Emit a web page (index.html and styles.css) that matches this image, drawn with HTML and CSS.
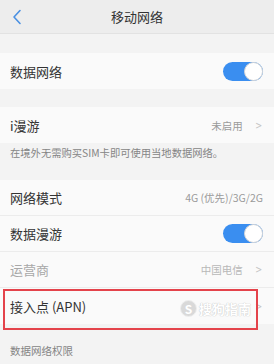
FILE: index.html
```html
<!DOCTYPE html>
<html lang="zh-CN">
<head>
<meta charset="utf-8">
<link rel="stylesheet" href="styles.css">
</head>
<body>
<div class="page">
  <header class="topbar">
    <svg class="back" width="12" height="16" viewBox="0 0 12 16"><path d="M9 1.5 L3 8 L9 14.5" fill="none" stroke="#4a90e2" stroke-width="1.6" stroke-linecap="round" stroke-linejoin="round"/></svg>
    <div class="title">移动网络</div>
  </header>
  <div class="gap"></div>
  <div class="group">
    <div class="row"><span class="label">数据网络</span><span class="toggle"><span class="knob"></span></span></div>
  </div>
  <div class="gap"></div>
  <div class="group">
    <div class="row"><span class="label">i漫游</span><span class="right"><span class="value">未启用</span><span class="chev">&gt;</span></span></div>
  </div>
  <div class="note">在境外无需购买SIM卡即可使用当地数据网络。</div>
  <div class="group">
    <div class="row sep"><span class="label">网络模式</span><span class="value">4G (优先)/3G/2G</span></div>
    <div class="row sep"><span class="label">数据漫游</span><span class="toggle"><span class="knob"></span></span></div>
    <div class="row sep"><span class="label dim">运营商</span><span class="right"><span class="value light">中国电信</span><span class="chev">&gt;</span></span></div>
    <div class="row apn"><span class="label">接入点 (APN)</span><span class="chev">&gt;</span>
      <div class="highlight"></div>
      <div class="watermark"><span class="wm-s">S</span><span>搜狗指南</span></div>
    </div>
  </div>
  <div class="section">数据网络权限</div>
</div>
</body>
</html>
```
FILE: styles.css
```css
html, body {
  margin: 0;
  padding: 0;
  background: #f3f3f3;
}
.page {
  width: 274px;
  height: 364px;
  overflow: hidden;
  font-family: "Noto Sans CJK SC", "Noto Sans", sans-serif;
  color: #333;
  background: #f3f3f3;
}
.topbar {
  height: 34px;
  box-sizing: border-box;
  background: #ededed;
  border-bottom: 1px solid #e2e2e2;
  display: flex;
  align-items: center;
  justify-content: center;
  position: relative;
}
.back {
  position: absolute;
  left: 11px;
  top: 9px;
}
.title {
  font-size: 13px;
  color: #333;
}
.gap {
  height: 19px;
}
.gap + .group + .gap {
  height: 18px;
}
.group {
  background: #fafafa;
}
.row {
  height: 36px;
  box-sizing: border-box;
  padding: 0 11px 0 10px;
  display: flex;
  align-items: center;
  justify-content: space-between;
  position: relative;
}
.row.sep {
  border-bottom: 1px solid #ececec;
}
.label {
  font-size: 13px;
  color: #333;
}
.label.dim {
  color: #a8a8a8;
}
.right {
  display: flex;
  align-items: center;
  gap: 11px;
}
.value {
  font-size: 10.5px;
  color: #9a9a9a;
}
.value.light {
  color: #b8b8b8;
}
.chev {
  font-size: 11px;
  color: #c4c4c4;
  font-family: "DejaVu Sans", sans-serif;
  transform: scaleX(0.75);
}
.toggle {
  width: 40px;
  height: 19px;
  border-radius: 10px;
  background: #3a8ef0;
  position: relative;
  display: block;
}
.knob {
  position: absolute;
  right: 0;
  top: 0;
  width: 19px;
  height: 19px;
  box-sizing: border-box;
  border-radius: 50%;
  background: #fff;
  border: 1px solid #d6d6d6;
}
.note {
  height: 37px;
  box-sizing: border-box;
  padding: 2px 0 0 10px;
  font-size: 10.3px;
  line-height: 15px;
  color: #858585;
}
.highlight {
  position: absolute;
  left: 3px;
  top: 1px;
  width: 255px;
  height: 41px;
  box-sizing: border-box;
  border: 2px solid #e4434b;
}
.watermark {
  position: absolute;
  left: 180px;
  top: 12px;
  font-size: 13px;
  line-height: 17px;
  font-weight: bold;
  color: #ffffff;
  text-shadow: 0 0 1px #c8c8c8, 0 0 1px #c8c8c8;
  display: flex;
  align-items: center;
  gap: 2px;
}
.wm-s {
  display: inline-flex;
  width: 17px;
  height: 17px;
  border-radius: 50%;
  background: #d9d9d9;
  border: 1px solid #eeeeee;
  align-items: center;
  justify-content: center;
  font-size: 12px;
  box-sizing: border-box;
  text-shadow: none;
}
.section {
  padding: 19px 0 0 10px;
  font-size: 10.5px;
  color: #858585;
}
```
